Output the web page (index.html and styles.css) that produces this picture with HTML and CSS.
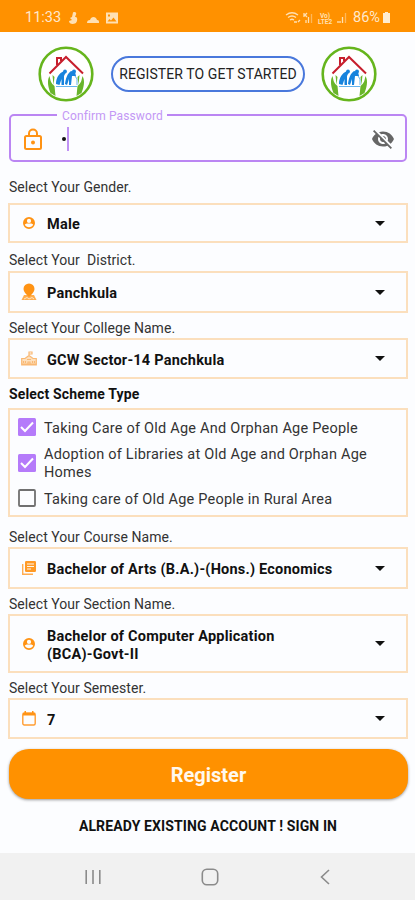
FILE: index.html
```html
<!DOCTYPE html>
<html lang="en">
<head>
<meta charset="utf-8">
<title>Register</title>
<link rel="stylesheet" href="styles.css">
</head>
<body>
<svg class="defs" width="0" height="0" aria-hidden="true">
  <symbol id="logo" viewBox="0 0 56 56">
    <circle cx="28" cy="28" r="26.300" fill="#fff" stroke="#66b51d" stroke-width="2.600"/>
    <path d="M11.500 27.500 28 11 45 27.500M19 19v-7h4v3" fill="none" stroke="#c71f2d" stroke-width="2"/>
    <path d="M18 38c0-6 3-11 8-13l2 1-2 4v9h-2.500v-6l-2 6zM27 38c1-6 2-10 6-13l4 1 1 4-4 0-1 9h-2v-6l-2 6z" fill="#1683dd"/>
    <circle cx="27" cy="25.500" r="1.900" fill="#1683dd"/><circle cx="36" cy="25.500" r="2" fill="#1683dd"/>
    <path d="M37 30l2 3v6M18 40.500h21" fill="none" stroke="#65b4ee" stroke-width="1"/>
    <path d="M11.500 30c1 4 1 7 5 10l1 10-5-3c-2-5-4-12-1-17zM44.500 30c-1 4-1 7-5 10l-1 10 5-3c2-5 4-12 1-17zM14.500 29l2 2-1 8zM41.500 29l-2 2 1 8z" fill="#69b52b"/>
  </symbol>
  <symbol id="person" viewBox="2 2 20 20"><path fill-rule="evenodd" d="M12 2a10 10 0 1 0 0 20 10 10 0 0 0 0-20zM12 5a3.500 3.500 0 1 1 0 7 3.500 3.500 0 0 1 0-7zM5 14.500c2-1.500 4-1.500 7-1.500s5 0 7 1.500c-1 3-4 4.500-7 4.500s-6-1.500-7-4.500z"/></symbol>
</svg>
<header class="status">
  <span class="time">11:33</span>
  <svg class="st-left" width="54" height="14" viewBox="0 0 54 14" fill="#ffe0b3">
    <path d="M5 1.500c2-1 4 0 3 2L7 6c3-1 3 5 0 6.500-3 1-6 0-6-2.500l3-1-2-2 2-1z"/>
    <path d="M19 12c0-2 1-3 3-3 1-4 6-4 7 0 2 0 2 1 2 3zM20 4l2 2M25 2v2"/>
    <path fill-rule="evenodd" d="M38 1.500h12v11H38zM39.500 10.500h9l-3-4-2.500 3-1.500-1.500zM40 3.500v2h2v-2z"/>
  </svg>
  <svg class="st-right" width="64" height="14" viewBox="0 0 64 14">
    <g fill="none" stroke="#ffe0b3" stroke-width="1.300"><path d="M1 4q6-4.500 12 0M3 6.500q4-3 8 0M5 9q2-1.500 4 0M9 11h3m1 0 2-2M21 12V9m2.500 3V6"/><path opacity=".5" d="M26.500 12V3M60.500 12V2"/><path d="M53 12v-2m2-0v2m2.500 0V6M19 2v4m3-4-2 2 2 2"/></g>
    <g fill="#ffe0b3" class="volte"><text x="35" y="6.500">Vo)</text><text x="33" y="13">LTE2</text></g>
  </svg>
  <span class="battery">86%</span>
  <svg width="9" height="13" viewBox="0 0 9 13" fill="#ffecd0"><path d="M3 1h3v1h2v10H1V2h2z"/></svg>
</header>
<main>
  <div class="brand">
    <svg width="56" height="56"><use href="#logo"/></svg>
    <h1>REGISTER TO GET STARTED</h1>
    <svg width="56" height="56"><use href="#logo"/></svg>
  </div>
  <div class="password">
    <span class="legend">Confirm Password</span>
    <svg class="lock" width="18" height="23" viewBox="0 0 18 23"><path d="M2.500 8h13q1.500 0 1.500 1.500v10q0 1.500-1.500 1.500h-13Q1 21 1 19.500v-10Q1 8 2.500 8zM5 8V5.500a4 4 0 0 1 8 0V8" fill="none" stroke="#ff9314" stroke-width="2"/><circle cx="9" cy="14.500" r="2" fill="#ff9314"/></svg>
    <span class="bullet"></span><span class="caret"></span>
    <svg class="eye" width="24" height="24" viewBox="0 0 24 24" fill="#666"><path d="M12 7c2.760 0 5 2.240 5 5 0 .65-.13 1.260-.36 1.830l2.920 2.920c1.510-1.260 2.700-2.890 3.430-4.750-1.730-4.390-6-7.500-11-7.500-1.400 0-2.740.25-3.980.7l2.160 2.160C10.740 7.130 11.350 7 12 7zM2 4.270l2.740 2.740C3.080 8.300 1.780 10.020 1 12c1.730 4.390 6 7.500 11 7.500 1.550 0 3.030-.3 4.380-.84L19.730 22 21 20.730 3.270 3zM7.530 9.800l1.550 1.550c-.05.21-.08.43-.08.65 0 1.660 1.340 3 3 3 .22 0 .44-.03.65-.08l1.550 1.550c-.67.33-1.410.53-2.200.53-2.760 0-5-2.240-5-5 0-.79.2-1.530.53-2.200zm4.310-.78 3.150 3.150.02-.16c0-1.660-1.340-3-3-3z"/></svg>
  </div>

  <div class="label gender">Select Your Gender.</div>
  <div class="select h40"><svg class="ic" width="13" height="12"><use href="#person"/></svg><span class="value">Male</span><i class="arrow"></i></div>

  <div class="label district">Select Your&nbsp; District.</div>
  <div class="select h42"><svg class="ic" width="16" height="18" viewBox="0 0 16 18"><path fill="#ffad4d" d="M3 12h10l2.500 5H.5z"/><path d="M8 .5a5.500 5.500 0 0 1 5.500 5.500C13.500 9 11 11 8 14 5 11 2.500 9 2.500 6A5.500 5.500 0 0 1 8 .5z"/><path d="M3 16l3-1.500 2 1.500 3-1.500 2 1.500" fill="none" stroke="#fff2df" stroke-width=".8"/></svg><span class="value">Panchkula</span><i class="arrow"></i></div>

  <div class="label college">Select Your College Name.</div>
  <div class="select h41"><svg class="ic" width="16" height="15" viewBox="0 0 16 15"><path d="M.7 7.500H4l4-3 4 3h3.300v6.300H.7z" fill="#fde0be"/><g fill="none" stroke="#f9b873" stroke-width="1.200"><path d="M.7 7.500H4l4-3 4 3h3.300v6.300H.7zM8 4.500V1h3v2H8M7 14v-3h2v3M2.500 10v2M4.500 10v2M11.500 10v2M13.500 10v2M6 8.500h4M1 13h14"/></g></svg><span class="value">GCW Sector-14 Panchkula</span><i class="arrow"></i></div>

  <div class="label scheme">Select Scheme Type</div>
  <div class="checks">
    <div class="check"><svg class="box" width="18" height="18" viewBox="0 0 18 18"><rect width="18" height="18" rx="1.500" fill="#b57bfa"/><path d="M3 9l4 4 8-8.500" fill="none" stroke="#fff" stroke-width="2"/></svg><span>Taking Care of Old Age And Orphan Age People</span></div>
    <div class="check two"><svg class="box" width="18" height="18" viewBox="0 0 18 18"><rect width="18" height="18" rx="1.500" fill="#b57bfa"/><path d="M3 9l4 4 8-8.500" fill="none" stroke="#fff" stroke-width="2"/></svg><span>Adoption of Libraries at Old Age and Orphan Age<br>Homes</span></div>
    <div class="check"><svg class="box" width="18" height="18" viewBox="0 0 18 18"><rect x="1" y="1" width="16" height="16" rx="1" fill="none" stroke="#707070" stroke-width="1.800"/></svg><span>Taking care of Old Age People in Rural Area</span></div>
  </div>

  <div class="label course">Select Your Course Name.</div>
  <div class="select h42"><svg class="ic" width="14" height="14" viewBox="0 0 14 14"><path d="M.7 3v10.300H11" fill="none" stroke="#ffac50" stroke-width="1.400"/><rect x="3" y="0" width="11" height="11" rx="1.200" fill="#ff9a26"/><path d="M5 3h7M5 5.500h7M5 8h4" stroke="#fff" stroke-width=".9"/></svg><span class="value">Bachelor of Arts (B.A.)-(Hons.) Economics</span><i class="arrow"></i></div>

  <div class="label section">Select Your Section Name.</div>
  <div class="select h59"><svg class="ic" width="13" height="12"><use href="#person"/></svg><span class="value">Bachelor of Computer Application<br>(BCA)-Govt-II</span><i class="arrow"></i></div>

  <div class="label semester">Select Your Semester.</div>
  <div class="select h41"><svg class="ic" width="14" height="15" viewBox="0 0 14 15"><rect x=".8" y="2" width="12.400" height="12" rx="1.500" fill="none" stroke="#ff9d32" stroke-width="1.400"/><path d="M1 2h12v2.500H1zM2.500 0H4v3H2.500zM10 0h1.500v3H10z"/></svg><span class="value">7</span><i class="arrow"></i></div>

  <div class="register">Register</div>
  <div class="signin">ALREADY EXISTING ACCOUNT ! SIGN IN</div>
</main>
<nav>
  <svg width="16" height="16" viewBox="0 0 16 16"><path d="M1.200 1v14M8 1v14M14.800 1v14" stroke="#8b8b8b" stroke-width="1.600"/></svg>
  <svg width="18" height="18" viewBox="0 0 18 18"><rect x="1.300" y="1.300" width="15.400" height="15.400" rx="4.500" fill="none" stroke="#8b8b8b" stroke-width="1.600"/></svg>
  <svg width="10" height="16" viewBox="0 0 10 16"><path d="M9 1 1.500 8 9 15" fill="none" stroke="#8b8b8b" stroke-width="1.600"/></svg>
</nav>
</body>
</html>
```
FILE: styles.css
```css
* { box-sizing: border-box; }
body {
  margin: 0;
  width: 415px;
  height: 900px;
  display: flex;
  flex-direction: column;
  overflow: hidden;
  background: #fcfdff;
  font-family: Roboto, "Liberation Sans", sans-serif;
  color: #111;
}
.defs { position: absolute; }
svg { flex: none; display: block; }
.status {
  height: 32px;
  flex: none;
  display: flex;
  align-items: center;
  background: #ff9100;
  color: #ffe8cc;
  padding: 3px 0 0 25px;
  font-size: 14.5px;
}
.time { width: 43px; }
.st-right { margin-left: 163px; }
.volte { font-size: 6.5px; font-weight: 700; }
.battery { margin-left: 4px; width: 29px; font-size: 14.5px; }
main { flex: 1; padding: 0 7px 0 8px; display: flex; flex-direction: column; }
.brand {
  height: 83px;
  flex: none;
  display: flex;
  align-items: center;
  padding: 0 31px 0 30px;
  justify-content: space-between;
}
h1 {
  margin: 0 0 0 1px;
  width: 194px;
  height: 36px;
  border: 2px solid #4978dc;
  border-radius: 18px;
  font-size: 14px;
  font-weight: 400;
  line-height: 33px;
  letter-spacing: .08px;
  text-align: center;
  white-space: nowrap;
  color: #222;
}
.password {
  position: relative;
  height: 48px;
  margin: -1px 1px 0;
  flex: none;
  border: 2px solid #bb86f3;
  border-radius: 5px;
  display: flex;
  align-items: center;
  padding: 2px 10px 0 13px;
}
.legend {
  position: absolute;
  left: 46px;
  top: -7px;
  padding: 0 4px 0 5px;
  background: #fcfdff;
  color: #c398f5;
  font-size: 12px;
  line-height: 15px;
  letter-spacing: .12px;
}
.bullet { width: 4px; height: 4px; border-radius: 50%; background: #111; margin-left: 20px; }
.caret { width: 2px; height: 24px; background: #c092f5; margin-left: 1px; }
.eye { margin-left: auto; }
.label {
  flex: none;
  padding-left: 1px;
  display: flex;
  align-items: flex-end;
  font-size: 14px;
  line-height: 18px;
  letter-spacing: .05px;
  color: #333;
}
.gender { height: 41px; padding-bottom: 7px; }
.district { height: 28px; padding-bottom: 2px; }
.college { height: 25px; padding-bottom: 1px; }
.scheme { height: 29px; padding-bottom: 5px; font-weight: 700; letter-spacing: .15px; color: #111; }
.course { height: 30px; padding-bottom: 1px; }
.section { height: 25px; padding-bottom: 1px; }
.semester { height: 25px; padding-bottom: 1px; }
.select {
  flex: none;
  display: flex;
  align-items: center;
  border: 2px solid #fbdfbd;
  padding: 0 21px 0 0;
}
.h40 { height: 40px; }
.h42 { height: 42px; }
.h41 { height: 41px; }
.h59 { height: 59px; }
.ic { margin: 0 10px; width: 18px; fill: #ff9314; }
.value {
  flex: 1;
  padding: 4px 0 0;
  margin-left: -1px;
  font-size: 14.5px;
  line-height: 18px;
  font-weight: 700;
  letter-spacing: .22px;
  white-space: nowrap;
}
.arrow {
  border: 5px solid transparent;
  border-top-color: #111;
  border-bottom: 0;
}
.checks {
  flex: none;
  height: 109px;
  border: 2px solid #fbdfbd;
  padding: 3px 0 0 8px;
  font-size: 14.5px;
  line-height: 18px;
  letter-spacing: .23px;
  color: #333;
}
.check { height: 28px; display: flex; align-items: center; gap: 8px; white-space: nowrap; }
.check span { padding-top: 3px; }
.two { height: 43px; }
.register {
  flex: none;
  height: 50px;
  margin: 10px 0 0 1px;
  border-radius: 20px;
  background: #ff9100;
  box-shadow: 0 1px 3px rgba(0, 0, 0, .4);
  color: #fff8ee;
  font-size: 20px;
  font-weight: 700;
  line-height: 52px;
  text-align: center;
}
.signin {
  height: 54px;
  line-height: 54px;
  text-align: center;
  font-size: 14px;
  font-weight: 700;
  letter-spacing: .12px;
}
nav {
  flex: none;
  height: 47px;
  background: #f1f1f1;
  display: flex;
  align-items: center;
  padding: 0 85px 0 85px;
  justify-content: space-between;
}
nav svg:nth-child(2) { margin-right: 2px; }
```
